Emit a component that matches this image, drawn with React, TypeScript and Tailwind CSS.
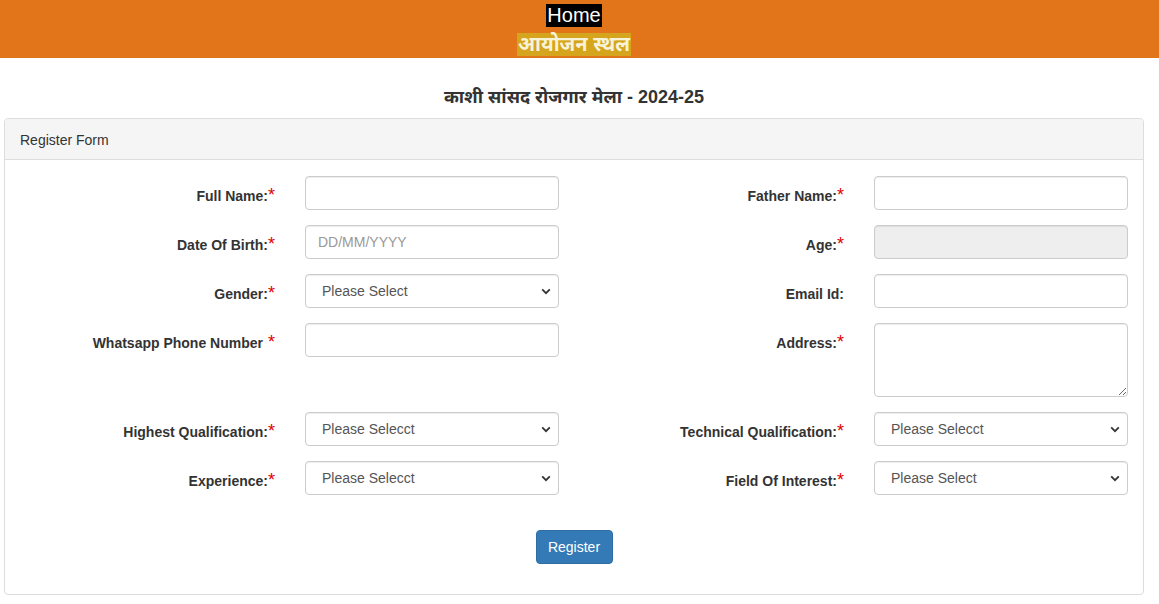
import React from "react";

const font = {
  fontFamily:
    '"Liberation Sans", Arial, "Noto Sans Devanagari", "Noto Sans", sans-serif',
};

function Chevron() {
  return (
    <svg
      width="10"
      height="7"
      viewBox="0 0 10 7"
      className="pointer-events-none absolute right-[8px] top-[14px]"
    >
      <path d="M1.2 1.4 L5 5.2 L8.8 1.4" fill="none" stroke="#333" strokeWidth="1.8" />
    </svg>
  );
}

function Label({ text, required = true, space = false }: { text: string; required?: boolean; space?: boolean }) {
  return (
    <label className="w-[270px] shrink-0 text-right pt-[10px] text-[14px] leading-[20px] font-bold text-[#333]">
      {text}
      {required && (
        <span className="text-[#e00000] font-normal text-[18px] leading-[10px]">{space ? " *" : "*"}</span>
      )}
    </label>
  );
}

const inputCls =
  "w-[254px] h-[34px] border border-[#ccc] rounded-[4px] px-[12px] text-[14px] text-[#555] shadow-[inset_0_1px_1px_rgba(0,0,0,0.075)] outline-none placeholder:text-[#999]";

function TextInput({ placeholder, disabled }: { placeholder?: string; disabled?: boolean }) {
  return (
    <input
      className={`${inputCls} ${disabled ? "bg-[#eee]" : "bg-white"}`}
      placeholder={placeholder}
      disabled={disabled}
    />
  );
}

function Select({ value }: { value: string }) {
  return (
    <div className="relative w-[254px]">
      <select className={`${inputCls} appearance-none bg-white pl-[16px]`} defaultValue={value}>
        <option>{value}</option>
      </select>
      <Chevron />
    </div>
  );
}

function Field({ label, required = true, space = false, children }: { label: string; required?: boolean; space?: boolean; children: React.ReactNode }) {
  return (
    <div className="flex items-start">
      <Label text={label} required={required} space={space} />
      <div className="ml-[30px]">{children}</div>
    </div>
  );
}

export default function App() {
  return (
    <div className="min-h-[604px] bg-white text-[#333]" style={font}>
      <header className="h-[58px] bg-[#e27419] flex flex-col items-center pr-[11px]">
        <span className="mt-[4px] bg-black text-white text-[20px] leading-[23px] px-[1px]">Home</span>
        <span className="mt-[6px] bg-[#d5a51d] text-[#f7f3d8] text-[20px] leading-[23px] font-bold px-[1px]">
          आयोजन स्थल
        </span>
      </header>

      <h2 className="mt-[28px] pr-[11px] text-center text-[18px] leading-[22px] font-bold text-[#333]">
        काशी सांसद रोजगार मेला - 2024-25
      </h2>

      <div className="mt-[10px] ml-[4px] w-[1140px] border border-[#ddd] rounded-[4px]">
        <div className="h-[41px] bg-[#f5f5f5] border-b border-[#ddd] rounded-t-[4px] px-[15px] text-[14px] leading-[42px] text-[#333]">
          Register Form
        </div>
        <div className="pt-[16px] pb-[30px]">
          <div className="grid grid-cols-2 gap-y-[15px]">
            <Field label="Full Name:">
              <TextInput />
            </Field>
            <Field label="Father Name:">
              <TextInput />
            </Field>
            <Field label="Date Of Birth:">
              <TextInput placeholder="DD/MM/YYYY" />
            </Field>
            <Field label="Age:">
              <TextInput disabled />
            </Field>
            <Field label="Gender:">
              <Select value="Please Select" />
            </Field>
            <Field label="Email Id:" required={false}>
              <TextInput />
            </Field>
            <Field label="Whatsapp Phone Number" space>
              <TextInput />
            </Field>
            <Field label="Address:">
              <textarea className={`${inputCls} h-[74px] block py-[6px] bg-white`} />
            </Field>
            <Field label="Highest Qualification:">
              <Select value="Please Selecct" />
            </Field>
            <Field label="Technical Qualification:">
              <Select value="Please Selecct" />
            </Field>
            <Field label="Experience:">
              <Select value="Please Selecct" />
            </Field>
            <Field label="Field Of Interest:">
              <Select value="Please Select" />
            </Field>
          </div>
          <div className="mt-[35px] flex justify-center">
            <button className="h-[34px] w-[77px] bg-[#337ab7] border border-[#2e6da4] rounded-[4px] text-white text-[14px]">
              Register
            </button>
          </div>
        </div>
      </div>
    </div>
  );
}
